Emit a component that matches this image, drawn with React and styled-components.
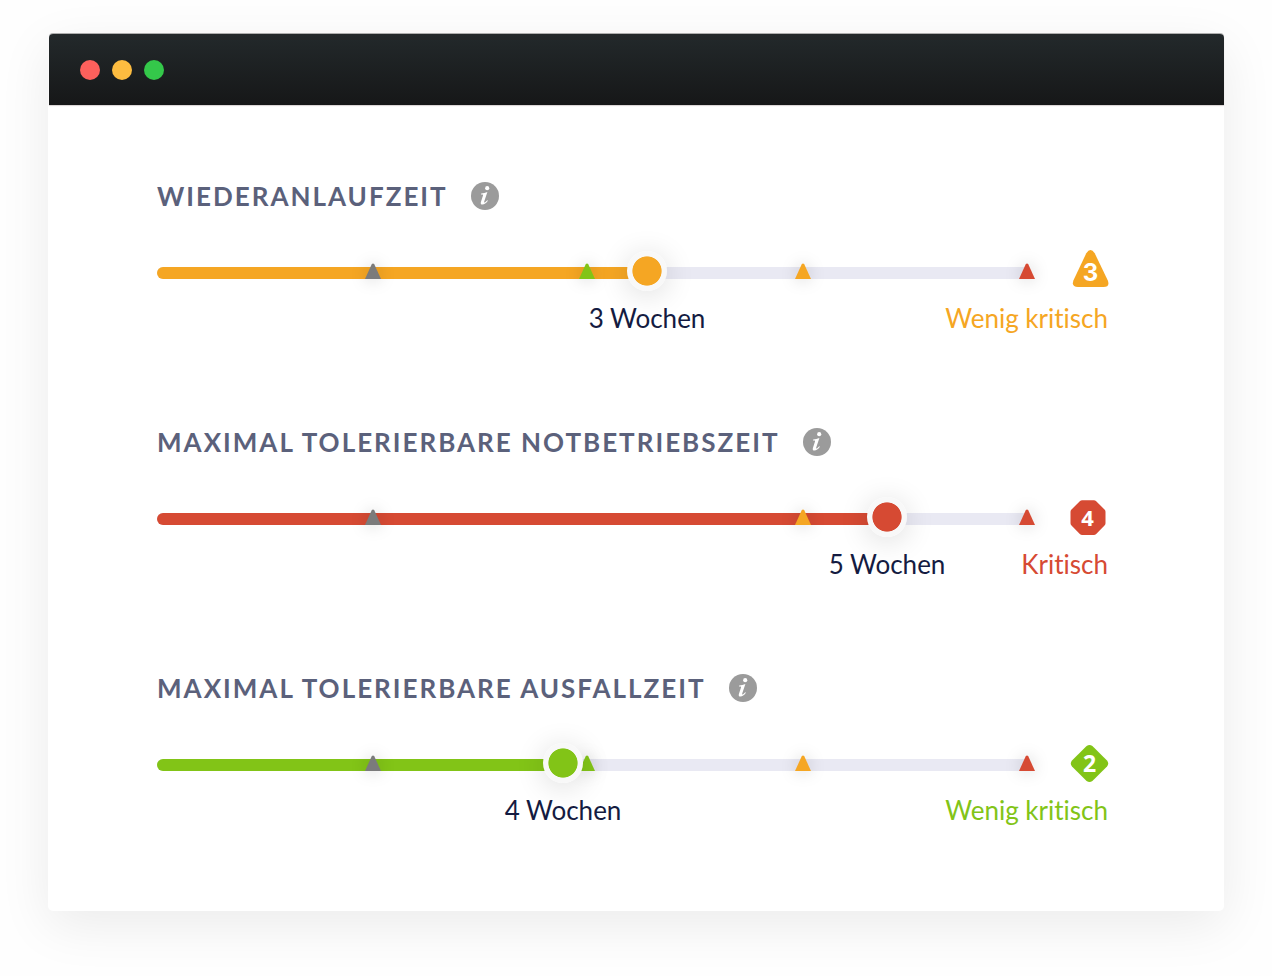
import React, { useId, useState } from "react";
import styled, { createGlobalStyle } from "styled-components";

const colors = {
  grey: "#7b7b7b",
  green: "#82c417",
  orange: "#f5a623",
  red: "#d64a33",
};

const GlobalStyle = createGlobalStyle`
  *, *::before, *::after { box-sizing: border-box; }
  body {
    margin: 0;
    background: #fefefe;
    font-family: Lato, "Open Sans", sans-serif;
    font-variant-ligatures: none;
  }
`;

const Page = styled.div`
  padding: 34px 48px 65px;
`;

const Window = styled.main`
  background: #fff;
  border-radius: 5px;
  box-shadow: 0 14px 52px rgba(0, 0, 0, 0.08);
`;

const TitleBar = styled.header`
  display: flex;
  align-items: center;
  gap: 12px;
  height: 71px;
  margin-left: 1px;
  padding: 0 31px;
  border-radius: 4px 4px 0 0;
  background: linear-gradient(#23292b, #161718);
  box-shadow: 0 1px 1px rgba(60, 30, 30, 0.2), 0 -1px 0 rgba(0, 0, 0, 0.3);
`;

const Dot = styled.span`
  width: 20px;
  height: 20px;
  border-radius: 50%;
  background: ${(p) => p.$color};
`;

const Content = styled.div`
  display: flex;
  flex-direction: column;
  gap: 92px;
  padding: 75px 116px 85px 109px;
`;

const Heading = styled.div`
  display: flex;
  align-items: center;
  gap: 23px;
  height: 32px;
`;

const Title = styled.label`
  color: #5b617b;
  font-size: 26px;
  font-weight: 700;
  line-height: 32px;
  letter-spacing: 2px;
  text-transform: uppercase;
`;

const InfoButton = styled.button`
  display: block;
  width: 28px;
  height: 28px;
  padding: 0;
  border: 0;
  background: none;
  cursor: pointer;
`;

const SliderRow = styled.div`
  display: grid;
  grid-template-columns: 1fr 38px;
  gap: 43px;
  height: 42px;
  margin-top: 38px;
`;

const Slider = styled.div`
  position: relative;
  display: flex;
  align-items: center;
`;

const Rail = styled.div`
  flex: 1;
  height: 12px;
  margin-top: 4px;
  border-radius: 6px 0 0 6px;
  background: #e9e9f3;
  overflow: hidden;
`;

const Fill = styled.div`
  height: 100%;
  background: ${(p) => p.$color};
`;

const Marker = styled.svg`
  position: absolute;
  bottom: 13px;
  width: 16px;
  height: 16px;
  margin-left: -8px;
  overflow: visible;
  fill: ${(p) => p.$color};
  filter: drop-shadow(0 0 8px rgba(0, 0, 0, 0.2));
`;

const thumb = `
  width: 40px;
  height: 40px;
  border: 0;
  border-radius: 50%;
  box-shadow: 0 4px 30px rgba(0, 0, 0, 0.14);
`;

const Range = styled.input`
  position: absolute;
  top: 0;
  left: -20px;
  width: calc(100% + 40px);
  height: 42px;
  margin: 0;
  background: none;
  appearance: none;
  cursor: pointer;

  &::-webkit-slider-thumb {
    appearance: none;
    ${thumb}
    background: radial-gradient(circle closest-side, ${(p) => p.$color} 71%, #f8f8f8 75%);
  }

  &::-moz-range-thumb {
    ${thumb}
    background: radial-gradient(circle closest-side, ${(p) => p.$color} 71%, #f8f8f8 75%);
  }
`;

const BadgeIcon = styled.svg`
  width: 38px;
  height: 40px;
  overflow: visible;
  fill: ${(p) => p.$color};

  text {
    fill: #fff;
    font-family: "Open Sans", sans-serif;
    font-weight: 700;
    text-anchor: middle;
  }
`;

const WideDigit = styled.text`
  && {
    font-family: Inter, sans-serif;
  }
`;

const Captions = styled.div`
  display: flex;
  justify-content: space-between;
  margin-top: 10px;
  font-size: 26px;
  line-height: 32px;
  white-space: nowrap;
`;

const ValueTrack = styled.div`
  position: relative;
  flex: 1;
  margin-right: 81px;
`;

const Value = styled.output`
  position: absolute;
  transform: translateX(-50%);
  color: #141b41;
`;

const Status = styled.span`
  width: 0;
  display: flex;
  justify-content: flex-end;
  color: ${(p) => p.$color};
`;

const badgeShapes = {
  3: (
    <>
      <path d="M16.3 3.2Q20.5-3 24.7 3.2L37.7 30.3Q40.3 37 33.5 37H8Q1 37 3.5 30.3Z" />
      <WideDigit x="20.5" y="31" fontSize="24">3</WideDigit>
    </>
  ),
  4: (
    <>
      <path d="M12.2 4.2H23.8Q25.2 4.2 26.2 5.2L34.5 13.4Q35.5 14.4 35.5 15.8V27.2Q35.5 28.6 34.5 29.6L26.2 38Q25.2 39 23.8 39H12.2Q10.8 39 9.8 38L1.5 29.6Q.5 28.6 .5 27.2V15.8Q.5 14.4 1.5 13.4L9.8 5.2Q10.8 4.2 12.2 4.2Z" />
      <text x="17.5" y="30" fontSize="22">4</text>
    </>
  ),
  2: (
    <>
      <path d="M16.6 4Q19.5 1.8 22.4 4L37 18.6Q39.4 21.5 37 24.4L22.4 39Q19.5 41.2 16.6 39L2 24.4Q-.4 21.5 2 18.6Z" />
      <text x="19.5" y="30" fontSize="23">2</text>
    </>
  ),
};

const GREY = { at: 216, color: colors.grey };
const GREEN = { at: 430, color: colors.green };
const ORANGE = { at: 646, color: colors.orange };
const RED = { at: 870, color: colors.red };
const SCALE = 870;

const criteria = [
  {
    title: "Wiederanlaufzeit",
    at: 490,
    value: "3 Wochen",
    status: "Wenig kritisch",
    level: 3,
    color: colors.orange,
    markers: [GREY, GREEN, ORANGE, RED],
  },
  {
    title: "Maximal tolerierbare Notbetriebszeit",
    at: 730,
    value: "5 Wochen",
    status: "Kritisch",
    level: 4,
    color: colors.red,
    markers: [GREY, ORANGE, RED],
  },
  {
    title: "Maximal tolerierbare Ausfallzeit",
    at: 406,
    value: "4 Wochen",
    status: "Wenig kritisch",
    level: 2,
    color: colors.green,
    markers: [GREY, GREEN, ORANGE, RED],
  },
];

const percent = (at) => `${(at / SCALE) * 100}%`;

function Criterion({ title, at, value, status, level, color, markers }) {
  const id = useId();
  const [position, setPosition] = useState(at);

  return (
    <section>
      <Heading>
        <Title htmlFor={id}>{title}</Title>
        <InfoButton type="button" aria-label={`Info: ${title}`}>
          <svg width="28" height="28" viewBox="0 0 28 28" aria-hidden="true">
            <circle cx="14" cy="14" r="14" fill="#9b9b9b" />
            <circle cx="16.2" cy="6.2" r="2.1" fill="#fff" />
            <path
              d="M10.2 11.6Q13.4 11 16.4 9.9L13.2 19.6Q12.9 21 14.2 20.2Q15.3 19.4 16.2 18.3L16.9 18.8Q14.2 22.6 11.4 22.6Q9.2 22.4 9.9 19.9L12 13.6Q12.4 12.3 11.3 12.4L10 12.5Z"
              fill="#fff"
            />
          </svg>
        </InfoButton>
      </Heading>
      <SliderRow>
        <Slider>
          <Rail>
            <Fill $color={color} style={{ width: percent(position) }} />
          </Rail>
          {markers.map((m) => (
            <Marker
              key={m.at}
              $color={m.color}
              viewBox="0 0 16 16"
              aria-hidden="true"
              style={{ left: percent(m.at) }}
            >
              <path d="M6.6 1.6Q8-.4 9.4 1.6L16 16H0Z" />
            </Marker>
          ))}
          <Range
            id={id}
            type="range"
            min="0"
            max={SCALE}
            value={position}
            $color={color}
            onChange={(e) => setPosition(Number(e.target.value))}
          />
        </Slider>
        <BadgeIcon $color={color} viewBox="0 0 38 40">
          {badgeShapes[level]}
        </BadgeIcon>
      </SliderRow>
      <Captions>
        <ValueTrack>
          <Value htmlFor={id} style={{ left: percent(position) }}>{value}</Value>
        </ValueTrack>
        <Status $color={color}>{status}</Status>
      </Captions>
    </section>
  );
}

export default function App() {
  return (
    <>
      <GlobalStyle />
      <Page>
        <Window>
          <TitleBar>
            <Dot $color="#fc605c" />
            <Dot $color="#fdbc40" />
            <Dot $color="#34c84a" />
          </TitleBar>
          <Content>
            {criteria.map((c) => (
              <Criterion key={c.title} {...c} />
            ))}
          </Content>
        </Window>
      </Page>
    </>
  );
}
